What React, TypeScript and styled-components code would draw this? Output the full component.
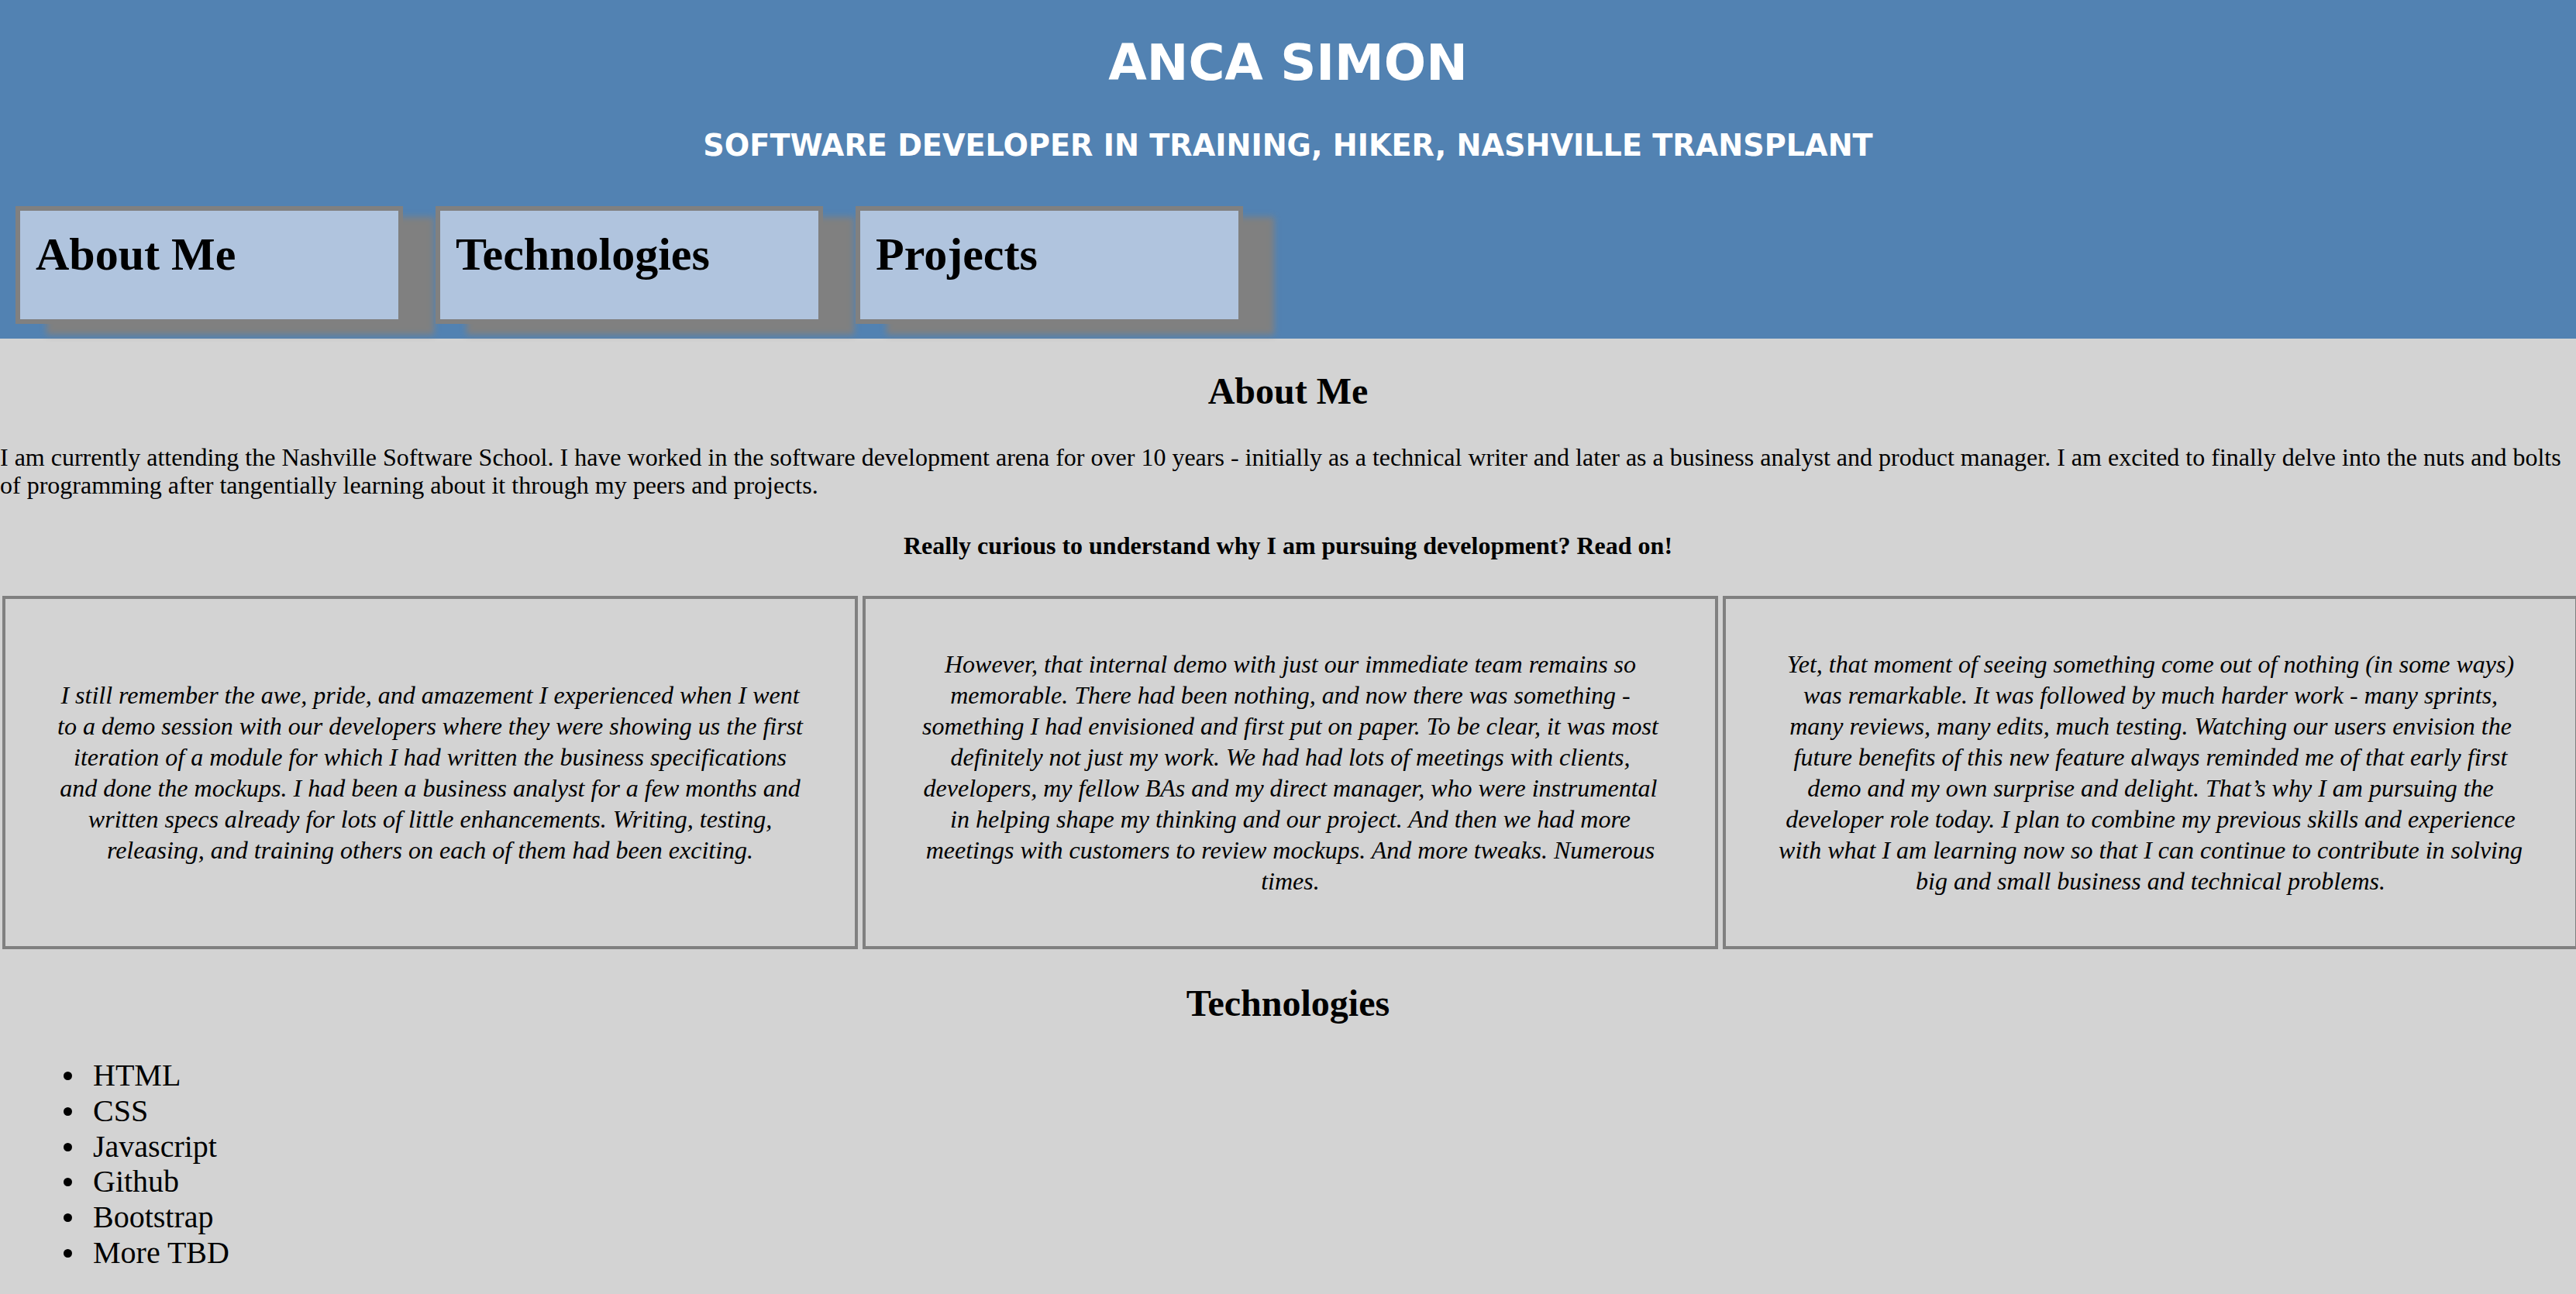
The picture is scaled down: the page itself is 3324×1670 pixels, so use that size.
import React from "react";
import styled, { createGlobalStyle } from "styled-components";

const GlobalStyle = createGlobalStyle`
  html, body {
    margin: 0;
    padding: 0;
    background: #d3d3d3;
  }
  body {
    font-family: "Liberation Serif", "Times New Roman", serif;
    font-size: 32px;
    color: #000;
    overflow-x: hidden;
  }
`;

const Header = styled.header`
  background: #5282b2;
  display: flex;
  flex-direction: column;
  padding-bottom: 19px;
`;

const Name = styled.h1`
  margin: 44px 0 0;
  font-family: Verdana, "DejaVu Sans", sans-serif;
  font-size: 64px;
  line-height: 75px;
  font-weight: bold;
  color: #fff;
  text-align: center;
`;

const Tagline = styled.h3`
  margin: 47px 0 0;
  font-family: Verdana, "DejaVu Sans", sans-serif;
  font-size: 38.2px;
  line-height: 44px;
  font-weight: bold;
  color: #fff;
  text-align: center;
`;

const Nav = styled.nav`
  display: flex;
  gap: 42px;
  padding-left: 20px;
  margin-top: 56px;
`;

const NavCard = styled.a`
  box-sizing: border-box;
  flex: 0 0 500px;
  height: 152px;
  padding: 22px 20px 20px;
  background: #b0c4de;
  border: 6px solid #808080;
  box-shadow: 40px 14px 8px #808080;
  font-size: 60px;
  line-height: 69px;
  font-weight: bold;
  color: #000;
  text-decoration: none;
`;

const Main = styled.main`
  display: block;
`;

const SectionTitle = styled.h2`
  margin: 39.84px 0;
  font-size: 48px;
  font-weight: bold;
  text-align: center;
`;

const Intro = styled.p`
  margin: 32px 0;
  line-height: 36px;
`;

const Teaser = styled.h4`
  margin: 42.56px 0;
  font-size: 32px;
  line-height: 36.8px;
  font-weight: bold;
  text-align: center;
`;

const StoryRow = styled.div`
  display: flex;
  overflow: hidden;
`;

const StoryCard = styled.div`
  box-sizing: border-box;
  flex: 0 0 1104px;
  margin: 3px;
  border: 4px solid #808080;
  padding: 32px 64px;
  display: flex;
  align-items: center;
  justify-content: center;
  text-align: center;
  font-style: italic;
`;

const StoryText = styled.p`
  margin: 32px 0;
  line-height: 40px;
`;

const TechList = styled.ul`
  margin: 43px 0 40px;
  padding-left: 120px;
  list-style: none;
  font-size: 40px;
  line-height: 45.7px;
`;

const TechItem = styled.li`
  display: flex;
  align-items: center;

  &::before {
    content: "";
    flex: 0 0 11px;
    height: 11px;
    margin: 1px 27px 0 -38px;
    border-radius: 50%;
    background: #000;
  }
`;

const stories = [
  "I still remember the awe, pride, and amazement I experienced when I went to a demo session with our developers where they were showing us the first iteration of a module for which I had written the business specifications and done the mockups. I had been a business analyst for a few months and written specs already for lots of little enhancements. Writing, testing, releasing, and training others on each of them had been exciting.",
  "However, that internal demo with just our immediate team remains so memorable. There had been nothing, and now there was something - something I had envisioned and first put on paper. To be clear, it was most definitely not just my work. We had had lots of meetings with clients, developers, my fellow BAs and my direct manager, who were instrumental in helping shape my thinking and our project. And then we had more meetings with customers to review mockups. And more tweaks. Numerous times.",
  "Yet, that moment of seeing something come out of nothing (in some ways) was remarkable. It was followed by much harder work - many sprints, many reviews, many edits, much testing. Watching our users envision the future benefits of this new feature always reminded me of that early first demo and my own surprise and delight. That\u2019s why I am pursuing the developer role today. I plan to combine my previous skills and experience with what I am learning now so that I can continue to contribute in solving big and small business and technical problems.",
];

const techs = ["HTML", "CSS", "Javascript", "Github", "Bootstrap", "More TBD"];

export default function App() {
  return (
    <>
      <GlobalStyle />
      <Header>
        <Name>ANCA SIMON</Name>
        <Tagline>SOFTWARE DEVELOPER IN TRAINING, HIKER, NASHVILLE TRANSPLANT</Tagline>
        <Nav>
          <NavCard href="#about">About Me</NavCard>
          <NavCard href="#technologies">Technologies</NavCard>
          <NavCard href="#projects">Projects</NavCard>
        </Nav>
      </Header>
      <Main>
        <SectionTitle id="about">About Me</SectionTitle>
        <Intro>
          I am currently attending the Nashville Software School. I have worked in the software
          development arena for over 10 years - initially as a technical writer and later as a
          business analyst and product manager. I am excited to finally delve into the nuts and
          bolts of programming after tangentially learning about it through my peers and projects.
        </Intro>
        <Teaser>Really curious to understand why I am pursuing development? Read on!</Teaser>
        <StoryRow>
          {stories.map((s, i) => (
            <StoryCard key={i}>
              <StoryText>{s}</StoryText>
            </StoryCard>
          ))}
        </StoryRow>
        <SectionTitle id="technologies">Technologies</SectionTitle>
        <TechList>
          {techs.map((t) => (
            <TechItem key={t}>{t}</TechItem>
          ))}
        </TechList>
      </Main>
    </>
  );
}
